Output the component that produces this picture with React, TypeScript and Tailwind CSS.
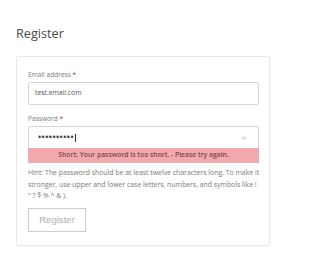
import React from 'react'

const sans = { fontFamily: '"Open Sans", "Noto Sans", sans-serif' }

function EyeIcon() {
  return (
    <svg width="6" height="4" viewBox="0 0 14 10" className="shrink-0">
      <path d="M1 5 C4 0.5 10 0.5 13 5 C10 9.5 4 9.5 1 5 Z" fill="none" stroke="#cfcfcf" strokeWidth="1.4" />
      <circle cx="7" cy="5" r="2.2" fill="#c8c8c8" />
    </svg>
  )
}

export default function App() {
  return (
    <div className="w-[300px] h-[263px] bg-white overflow-hidden" style={sans}>
      <div className="pl-[16px] pr-[30px] pt-[25px]">
        <h1 className="text-[12.7px] leading-[16px] text-[#4a4a4a] font-normal">Register</h1>

        <div className="mt-[15px] border border-[#e8e8e8] rounded-[2px] shadow-[0_1px_2px_rgba(0,0,0,0.04)] pt-[14px] pb-[13px] pl-[11px] pr-[10px]">
          {/* Email */}
          <label className="block text-[6.6px] leading-[8px] text-[#7a7a7a]">
            Email address <span className="text-[#c0392b]">*</span>
          </label>
          <div className="mt-[3px] h-[23px] border border-[#d6d6d6] rounded-[2px] flex items-center pl-[6px]">
            <span className="text-[6.8px] text-[#555]">test.email.com</span>
          </div>

          {/* Password */}
          <label className="block mt-[10px] text-[6.6px] leading-[8px] text-[#7a7a7a]">
            Password <span className="text-[#c0392b]">*</span>
          </label>
          <div className="mt-[3px] h-[22px] border border-[#d6d6d6] border-b-0 rounded-t-[3px] flex items-center pl-[9px] pr-[11px]">
            <span
              className="text-[9px] leading-none text-[#444] tracking-[0.45px]"
              style={{ fontFamily: '"Liberation Sans", Arial, sans-serif' }}
            >
              ••••••••••
            </span>
            <span className="ml-[0.5px] w-[1px] h-[8px] bg-[#333]" />
            <span className="flex-1" />
            <EyeIcon />
          </div>
          <div className="h-[15px] bg-[#f1a9ae] flex items-center justify-center">
            <span className="text-[6.8px] font-semibold text-[#854449]">
              Short: Your password is too short. - Please try again.
            </span>
          </div>

          {/* Hint */}
          <p className="mt-[4px] text-[6.9px] leading-[11.7px] text-[#7a7a7a] whitespace-nowrap">
            Hint: The password should be at least twelve characters long. To make it
            <br />
            stronger, use upper and lower case letters, numbers, and symbols like !
            <br />
            &quot; ? $ % ^ &amp; ).
          </p>

          <button
            className="mt-[6px] w-[58px] h-[24px] border border-[#cccccc] bg-white text-[9.6px] text-[#b0b0b0] flex items-center justify-center"
            style={{ fontFamily: '"Liberation Sans", Arial, sans-serif' }}
          >
            Register
          </button>
        </div>
      </div>
    </div>
  )
}
